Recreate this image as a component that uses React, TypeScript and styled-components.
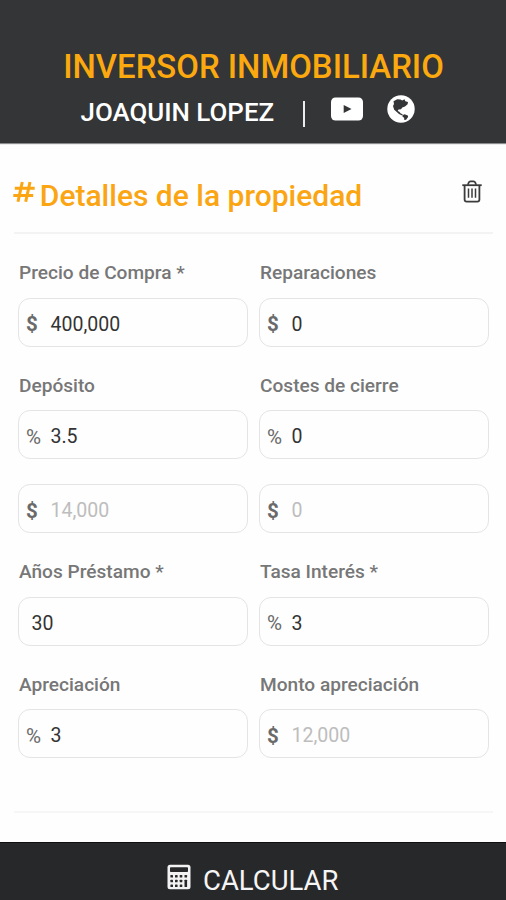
import React from 'react';
import styled, { createGlobalStyle } from 'styled-components';

const GlobalStyle = createGlobalStyle`
  *, *::before, *::after { box-sizing: border-box; }
  body { margin: 0; background: #fefefe; font-family: Roboto, sans-serif; }
`;

const Screen = styled.div`
  display: flex;
  flex-direction: column;
  width: 100%;
  height: 900px;
  overflow: hidden;
  background: #fefefe;
`;

const Header = styled.header`
  flex: none;
  height: 143px;
  padding-top: 47px;
  background: #343537;
  box-shadow: 0 1px 1px rgba(0, 0, 0, 0.45);
  text-align: center;
`;

const AppTitle = styled.h1`
  margin: 0;
  padding-left: 1px;
  font-size: 32.9px;
  font-weight: 500;
  line-height: 40px;
  color: #fba90f;
`;

const Byline = styled.div`
  display: flex;
  align-items: center;
  height: 40px;
  margin-top: 5px;
  padding-left: 80.5px;
  font-size: 25.9px;
  font-weight: 500;
  color: #fff;
`;

const Separator = styled.span`
  width: 2px;
  height: 26px;
  margin: 3px 26px 0 28.700px;
  background: #ececec;
`;

const YoutubeIcon = styled.svg`
  width: 32px;
  height: 24px;
  margin-top: -7px;
`;

const GlobeIcon = styled.svg`
  width: 28px;
  height: 28px;
  margin: -7px 0 0 24px;
`;

const Main = styled.main`
  flex: 1;
  padding: 0 13px 0 14px;
`;

const SectionHeader = styled.div`
  display: flex;
  align-items: center;
  height: 91px;
  padding-top: 16px;
  border-bottom: 2px solid #f3f3f3;
`;

const HashIcon = styled.svg`
  flex: none;
  width: 22px;
  height: 22px;
  margin: -7px 0 0 -1px;
`;

const SectionTitle = styled.h2`
  flex: 1;
  margin: 1px 0 0 4.800px;
  font-size: 30px;
  font-weight: 500;
  line-height: 36px;
  color: #faa511;
`;

const ClearButton = styled.button`
  display: flex;
  margin: -8px 11px 0 0;
  padding: 0;
  border: 0;
  background: none;
`;

const Fields = styled.div`
  display: grid;
  grid-template-columns: 230px 230px;
  column-gap: 11px;
  row-gap: 25px;
  padding: 25px 0 52.500px 4px;
  border-bottom: 2px solid #f6f6f6;
`;

const Field = styled.label`
  display: block;
`;

const Caption = styled.span`
  display: block;
  height: 38.5px;
  padding-left: 1px;
  font-size: 19.1px;
  font-weight: 500;
  line-height: 28px;
  color: #777;
`;

const InputBox = styled.span`
  display: flex;
  align-items: center;
  height: 49px;
  padding: 4px 8px 0 7px;
  border: 1.5px solid #e4e4e4;
  border-radius: 12px;
  font-size: 19.5px;
`;

const Unit = styled.span<{ $bold: boolean }>`
  width: 24.5px;
  font-size: 20.5px;
  font-weight: ${(p) => (p.$bold ? 700 : 400)};
  color: #6a6a6a;
`;

const Value = styled.span<{ $muted?: boolean; $indent?: boolean }>`
  padding-left: ${(p) => (p.$indent ? 5.5 : 0)}px;
  color: ${(p) => (p.$muted ? '#bdbdbd' : '#333')};
`;

const CalculateButton = styled.button`
  display: flex;
  flex: none;
  align-items: center;
  justify-content: center;
  gap: 12.500px;
  height: 58px;
  padding: 18px 1px 0 0;
  border: 0;
  border-top: 1.5px solid #0f0f10;
  background: #27282a;
  font: 400 27.5px/36px Roboto, sans-serif;
  color: #f5f5f5;
`;

const CalculatorIcon = styled.svg`
  width: 24px;
  height: 26px;
  margin-top: -7px;
`;

interface FieldData {
  caption?: string;
  unit?: '$' | '%';
  value: string;
  muted?: boolean;
}

const fields: FieldData[] = [
  { caption: 'Precio de Compra *', unit: '$', value: '400,000' },
  { caption: 'Reparaciones', unit: '$', value: '0' },
  { caption: 'Depósito', unit: '%', value: '3.5' },
  { caption: 'Costes de cierre', unit: '%', value: '0' },
  { unit: '$', value: '14,000', muted: true },
  { unit: '$', value: '0', muted: true },
  { caption: 'Años Préstamo *', value: '30' },
  { caption: 'Tasa Interés *', unit: '%', value: '3' },
  { caption: 'Apreciación', unit: '%', value: '3' },
  { caption: 'Monto apreciación', unit: '$', value: '12,000', muted: true },
];

const calculatorKeys = [
  [4.7, 12.3], [9.3, 12.3], [14, 12.3], [18.8, 12.3],
  [4.7, 17], [9.3, 17], [14, 17],
  [4.7, 21.8], [9.3, 21.8], [14, 21.8],
];

export default function App() {
  return (
    <>
      <GlobalStyle />
      <Screen>
        <Header>
          <AppTitle>INVERSOR INMOBILIARIO</AppTitle>
          <Byline>
            <span>JOAQUIN LOPEZ</span>
            <Separator />
            <YoutubeIcon viewBox="0 0 32 24">
              <rect y=".5" width="32" height="23" rx="4.5" fill="#fff" />
              <path d="M12.700 8 20.500 12l-7.800 4z" fill="#343537" />
            </YoutubeIcon>
            <GlobeIcon viewBox="0 0 28 28">
              <circle cx="14" cy="14" r="13.7" fill="#fff" />
              <path
                d="M6.500 6.300 10.200 4.300l3.300.2 1.700.9 2.300-1.200.8 2 2.700.8-.4 2.200-2.600 2.300-2.700 1-1.300 1.800-2.500.3-.8 1.500 1.600.7 1.200 1.500 2.300 1.200-.6.9-3.200-1.300-2.800-2.700-2-1.700-1.200-3.700 1-2z"
                fill="#343537"
              />
              <path d="m15.500 20.300 2-1 3.300 1.100.3 1.500-2 2.800-1.800.3-.2-2.300-1.500-1z" fill="#343537" />
            </GlobeIcon>
          </Byline>
        </Header>
        <Main>
          <SectionHeader>
            <HashIcon viewBox="0 0 22 22" fill="none" stroke="#faa511" strokeWidth="3">
              <path d="M9.300 1 5 20.800M17 1 12.700 20.800M1.800 7.200H21.700M.3 14.600H20.200" />
            </HashIcon>
            <SectionTitle>Detalles de la propiedad</SectionTitle>
            <ClearButton aria-label="Borrar">
              <svg width="20" height="23" viewBox="0 0 20 23" fill="none" stroke="#3b3b3b">
                <path d="M.3 5.200H19.700" strokeWidth="1.800" />
                <path d="M5.800 4.800 6.700 2.600Q7.200 1.300 8.500 1.300H11.500Q12.800 1.300 13.300 2.600L14.200 4.800" strokeWidth="1.700" />
                <path d="M2.600 5.500V19.500Q2.600 21.600 4.700 21.600H15.300Q17.400 21.600 17.400 19.500V5.500" strokeWidth="1.800" />
                <path d="M6.500 8.500V17.800M10 8.500V17.800M13.500 8.500V17.800" strokeWidth="1.500" />
              </svg>
            </ClearButton>
          </SectionHeader>
          <Fields>
            {fields.map((f, i) => (
              <Field key={i}>
                {f.caption && <Caption>{f.caption}</Caption>}
                <InputBox>
                  {f.unit && <Unit $bold={f.unit === '$'}>{f.unit}</Unit>}
                  <Value $muted={f.muted} $indent={!f.unit}>{f.value}</Value>
                </InputBox>
              </Field>
            ))}
          </Fields>
        </Main>
        <CalculateButton>
          <CalculatorIcon viewBox="0 0 24 26">
            <rect x=".5" y=".7" width="23" height="24.600" rx="2.500" fill="#f2f2f2" />
            <rect x="3" y="3.200" width="18" height="4.800" rx=".8" fill="#27282a" />
            {calculatorKeys.map(([x, y]) => (
              <rect key={`${x}-${y}`} x={x - 1.3} y={y - 1.3} width="2.600" height="2.600" rx=".6" fill="#27282a" />
            ))}
            <rect x="17.500" y="15.700" width="2.600" height="7.400" rx=".6" fill="#27282a" />
          </CalculatorIcon>
          <span>CALCULAR</span>
        </CalculateButton>
      </Screen>
    </>
  );
}
